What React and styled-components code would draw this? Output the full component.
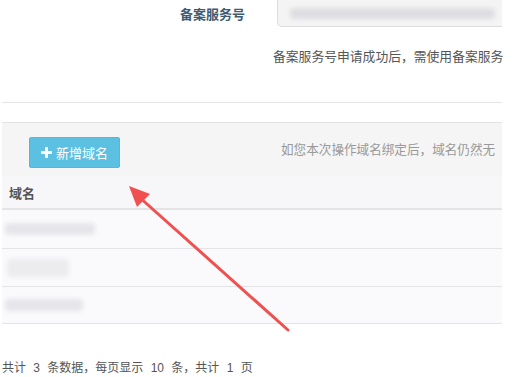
import React from "react";
import styled, { createGlobalStyle } from "styled-components";

const GlobalStyle = createGlobalStyle`
  body {
    margin: 0;
    background: #fff;
    font-family: "Liberation Sans", "Noto Sans CJK SC", sans-serif;
    overflow: hidden;
  }
`;

const Page = styled.div`
  position: relative;
  width: 500px;
  margin-left: 2px;
  padding-top: 1px;
`;

const FormRow = styled.div`
  display: flex;
  align-items: center;
  margin-top: -9px;
  height: 36px;
`;

const Label = styled.div`
  width: 243px;
  text-align: right;
  font-size: 13px;
  font-weight: bold;
  color: #3e5b74;
  padding-top: 6px;
`;

const Input = styled.div`
  margin-left: 32px;
  flex: 1;
  height: 34px;
  background: #f4f4f4;
  border: 1px solid #dcdcdc;
  border-right: none;
  border-radius: 0 0 0 5px;
  display: flex;
  align-items: center;
  padding: 6px 0 0 12px;
  box-sizing: border-box;
`;

const Blur = styled.span`
  display: inline-block;
  width: ${(p) => p.$w}px;
  height: ${(p) => p.$h || 12}px;
  background: ${(p) => p.$c || "#dedee2"};
  filter: blur(2px);
  border-radius: 4px;
`;

const Help = styled.div`
  margin: 18px 0 0 271px;
  font-size: 12.8px;
  color: #555;
  white-space: nowrap;
`;

const Divider = styled.div`
  margin-top: 37px;
  border-top: 1px solid #e6e6e6;
  height: 19px;
`;

const Toolbar = styled.div`
  border-top: 1px solid #e2e2e2;
  background: #f5f5f5;
  height: 54px;
  display: flex;
  align-items: flex-start;
  padding: 14px 0 0 27px;
  box-sizing: border-box;
`;

const AddButton = styled.button`
  width: 91px;
  height: 31px;
  border: 1px solid #52b8dc;
  border-radius: 2px;
  background: #5bc0e2;
  color: #fff;
  font-family: inherit;
  font-size: 13px;
  display: flex;
  align-items: center;
  justify-content: center;
  gap: 4px;
  padding: 0;
`;

const Notice = styled.div`
  margin: 2px 0 0 161px;
  font-size: 12.6px;
  color: #999;
  white-space: nowrap;
`;

const HeadRow = styled.div`
  height: 34px;
  background: #f7f7f9;
  border-bottom: 2px solid #e4e4e6;
  display: flex;
  align-items: center;
  padding-left: 7px;
  font-size: 13px;
  font-weight: bold;
  color: #555;
  box-sizing: border-box;
`;

const Row = styled.div`
  height: ${(p) => p.$h}px;
  background: #fafafd;
  border-bottom: 1px solid #e4e4e6;
  display: flex;
  align-items: center;
  padding-left: ${(p) => p.$pad || 3}px;
  box-sizing: border-box;
`;

const Footer = styled.div`
  margin-top: 37px;
  font-size: 12px;
  line-height: 14px;
  color: #555;
  word-spacing: 4px;
  padding-bottom: 3px;
  border-bottom: 1px solid #e6e6e6;
`;

const ArrowLayer = styled.svg`
  position: absolute;
  left: 0;
  top: 0;
  pointer-events: none;
`;

const Plus = () => (
  <svg width="11" height="11" viewBox="0 0 11 11">
    <path d="M4 0h3v4h4v3H7v4H4V7H0V4h4z" fill="#fff" />
  </svg>
);

export default function App() {
  return (
    <>
      <GlobalStyle />
      <Page>
        <FormRow>
          <Label>备案服务号</Label>
          <Input>
            <Blur $w={205} $h={11} />
          </Input>
        </FormRow>
        <Help>备案服务号申请成功后，需使用备案服务</Help>
        <Divider />
        <Toolbar>
          <AddButton>
            <Plus />
            新增域名
          </AddButton>
          <Notice>如您本次操作域名绑定后，域名仍然无</Notice>
        </Toolbar>
        <HeadRow>域名</HeadRow>
        <Row $h={39}>
          <Blur $w={90} $h={12} $c="#e6e6ea" />
        </Row>
        <Row $h={38} $pad={5}>
          <Blur $w={62} $h={18} $c="#ececef" />
        </Row>
        <Row $h={37}>
          <Blur $w={78} $h={12} $c="#e6e6ea" />
        </Row>
        <Footer>共计 3 条数据，每页显示 10 条，共计 1 页</Footer>
        <ArrowLayer width="500" height="377" viewBox="0 0 500 377">
          <line x1="286" y1="330" x2="136" y2="196" stroke="#f05050" strokeWidth="3" strokeLinecap="round" />
          <polygon points="127,186 148,194 135,207" fill="#f05050" />
        </ArrowLayer>
      </Page>
    </>
  );
}
